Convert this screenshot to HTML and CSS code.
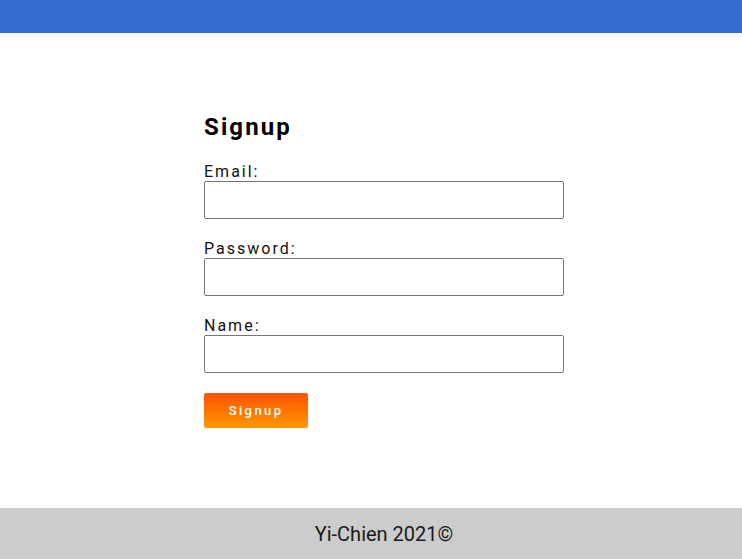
FILE: index.html
```html
<!DOCTYPE html>
<html>
<head>
<meta charset="utf-8">
<link rel="stylesheet" href="styles.css">
</head>
<body>
<div class="page">
  <header class="topbar"></header>
  <main class="main">
    <form class="form">
      <h2 class="title">Signup</h2>
      <label class="label">Email:</label>
      <input class="field" type="text">
      <label class="label">Password:</label>
      <input class="field" type="password">
      <label class="label">Name:</label>
      <input class="field" type="text">
      <button class="btn" type="button">Signup</button>
    </form>
  </main>
  <footer class="footer">Yi-Chien 2021©</footer>
</div>
</body>
</html>
```
FILE: styles.css
```css
* { box-sizing: border-box; }
html, body { margin: 0; padding: 0; }
body { font-family: Roboto, "Liberation Sans", sans-serif; color: #000; background: #fff; }
.page { display: flex; flex-direction: column; height: 559px; }
.topbar { height: 33px; background: #366bd1; flex: none; }
.main { flex: 1; display: flex; justify-content: center; align-items: center; padding-left: 26px; }
.form { width: 360px; display: flex; flex-direction: column; }
.title { margin: 0 0 21px; font-size: 24px; line-height: 28px; font-weight: 700; letter-spacing: 2.1px; }
.label { font-size: 16px; line-height: 19px; letter-spacing: 2px; color: #111; }
.field { height: 38px; border: 1px solid #767676; border-radius: 2px; margin: 0 0 20px; padding: 0 8px; font-size: 16px; background: #fff; }
.btn { width: 104px; height: 35px; border: none; border-radius: 2px; background: linear-gradient(#ff5200, #ff9800); color: #fff; font-family: Roboto, sans-serif; font-size: 13px; font-weight: 500; letter-spacing: 2.4px; padding: 0; }
.footer { height: 51px; flex: none; background: #cccccc; display: flex; align-items: center; justify-content: center; padding-left: 26px; font-size: 20px; color: #1a1a1a; }
```
